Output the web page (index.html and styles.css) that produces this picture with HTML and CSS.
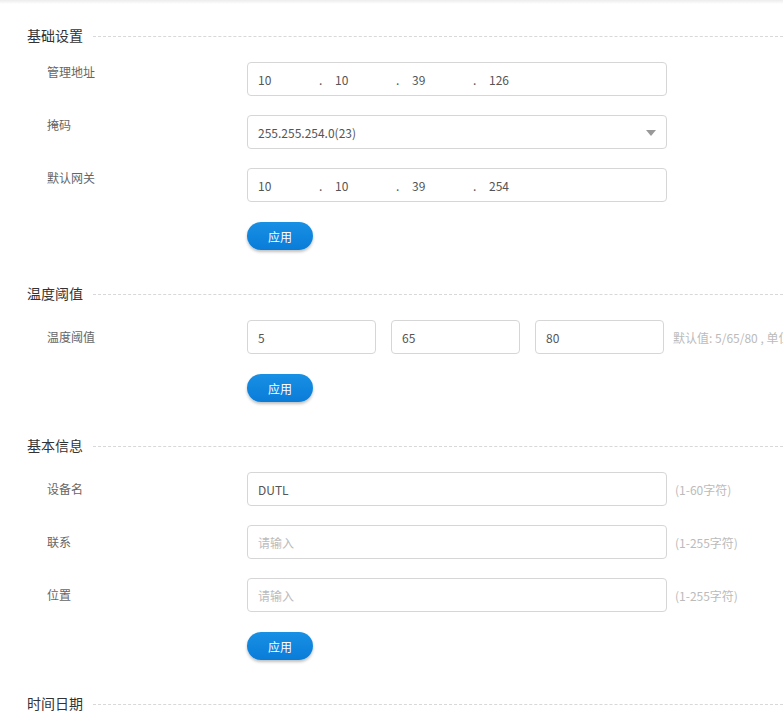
FILE: index.html
```html
<!DOCTYPE html>
<html lang="zh-CN">
<head>
<meta charset="utf-8">
<title>设置</title>
<link rel="stylesheet" href="styles.css">
</head>
<body>
<div class="topshade"></div>
<main class="page">
  <section class="section">
    <div class="sec-head"><span class="sec-title">基础设置</span><span class="sec-line"></span></div>
    <div class="row row-top">
      <label class="label">管理地址</label>
      <div class="field ip">
        <span class="seg">10</span><span class="dot">.</span>
        <span class="seg">10</span><span class="dot">.</span>
        <span class="seg">39</span><span class="dot">.</span>
        <span class="seg">126</span>
      </div>
    </div>
    <div class="row row-top">
      <label class="label">掩码</label>
      <div class="field select">
        <span>255.255.254.0(23)</span>
        <svg class="arrow" width="10" height="6" viewBox="0 0 10 6"><path d="M0 0H10L5 6Z" fill="#999"/></svg>
      </div>
    </div>
    <div class="row row-top">
      <label class="label">默认网关</label>
      <div class="field ip">
        <span class="seg">10</span><span class="dot">.</span>
        <span class="seg">10</span><span class="dot">.</span>
        <span class="seg">39</span><span class="dot">.</span>
        <span class="seg">254</span>
      </div>
    </div>
    <div class="row btn-row"><span class="label"></span><button class="btn">应用</button></div>
  </section>

  <section class="section">
    <div class="sec-head"><span class="sec-title">温度阈值</span><span class="sec-line"></span></div>
    <div class="row">
      <label class="label">温度阈值</label>
      <div class="triple">
        <div class="field small">5</div>
        <div class="field small">65</div>
        <div class="field small">80</div>
      </div>
      <span class="hint hint-near">默认值: 5/65/80 , 单位: ℃</span>
    </div>
    <div class="row btn-row"><span class="label"></span><button class="btn">应用</button></div>
  </section>

  <section class="section">
    <div class="sec-head"><span class="sec-title">基本信息</span><span class="sec-line"></span></div>
    <div class="row">
      <label class="label">设备名</label>
      <div class="field text">DUTL</div>
      <span class="hint">(1-60字符)</span>
    </div>
    <div class="row">
      <label class="label">联系</label>
      <div class="field text placeholder">请输入</div>
      <span class="hint">(1-255字符)</span>
    </div>
    <div class="row">
      <label class="label">位置</label>
      <div class="field text placeholder">请输入</div>
      <span class="hint">(1-255字符)</span>
    </div>
    <div class="row btn-row"><span class="label"></span><button class="btn">应用</button></div>
  </section>

  <section class="section">
    <div class="sec-head"><span class="sec-title">时间日期</span><span class="sec-line"></span></div>
  </section>
</main>
</body>
</html>
```
FILE: styles.css
```css
html, body {
  margin: 0;
  padding: 0;
  overflow: hidden;
  background: #fff;
}
body {
  font-family: "Microsoft YaHei", "Noto Sans CJK SC", "Noto Sans", sans-serif;
  font-size: 12px;
  color: #555;
  width: 783px;
  height: 712px;
}
.topshade {
  height: 4px;
  background: linear-gradient(#ececec, #fff);
}
.page {
  padding: 21px 0 0 27px;
  display: flex;
  flex-direction: column;
  gap: 33px;
}
.section {
  display: flex;
  flex-direction: column;
}
.sec-head {
  display: flex;
  align-items: center;
  height: 20px;
  margin-bottom: 17px;
}
.sec-title {
  font-size: 14px;
  line-height: 20px;
  color: #333;
  white-space: nowrap;
}
.sec-line {
  flex: 1;
  margin-left: 10px;
  margin-top: 2px;
  border-top: 1px dashed #d8d8d8;
}
.row {
  display: flex;
  align-items: center;
  padding-left: 20px;
  white-space: nowrap;
  margin-bottom: 19px;
}
.row-top { align-items: flex-start; }
.row-top .label { line-height: 20px; }
.btn-row { margin-bottom: 0; margin-top: 1px; }
.label {
  width: 200px;
  flex: none;
  color: #666;
  font-size: 12px;
  line-height: 20px;
}
.field {
  box-sizing: border-box;
  height: 34px;
  border: 1px solid #d6d6d6;
  border-radius: 4px;
  padding: 0 10px;
  display: flex;
  align-items: center;
  color: #555;
  font-size: 12px;
  flex: none;
  background: #fff;
}
.ip, .select, .text { width: 420px; }
.seg { width: 61px; }
.dot { width: 16px; }
.select { justify-content: space-between; padding-right: 10px; }
.arrow { display: block; margin-top: 1px; }
.triple { display: flex; gap: 15px; }
.small { width: 129px; }
.placeholder { color: #bbb; }
.hint {
  color: #bbb;
  margin-left: 8px;
  font-size: 12px;
}
.hint-near { margin-left: 9px; }
.btn {
  width: 66px;
  height: 28px;
  border: none;
  border-radius: 14px;
  background: linear-gradient(#1890e4, #0a7cd8);
  box-shadow: 0 2px 3px rgba(0, 0, 0, 0.25);
  color: #fff;
  font-family: inherit;
  font-size: 12px;
  padding: 0;
  cursor: pointer;
}
```
